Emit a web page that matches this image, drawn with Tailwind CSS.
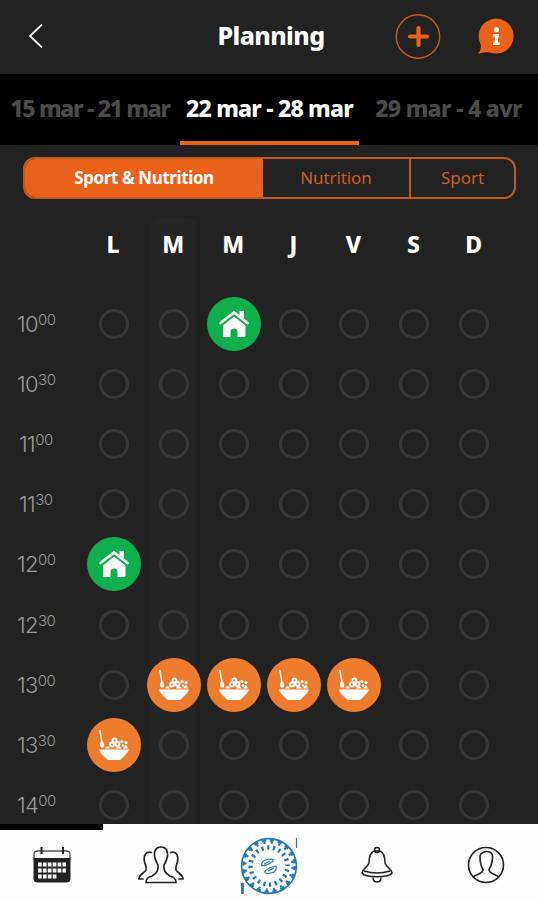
<!DOCTYPE html>
<html lang="fr">

<head>
    <meta charset="UTF-8">
    <meta name="viewport" content="width=device-width, initial-scale=1.0">
    <title>Planning</title>
    <script src="https://cdn.jsdelivr.net/npm/@tailwindcss/browser@4"></script>
</head>

<body class="flex flex-col w-[538px] h-[900px] overflow-hidden bg-[#222] text-white font-['Noto_Sans',sans-serif]">
    <!-- Header -->
    <header class="grid grid-cols-[1fr_auto_1fr] items-center h-[74px] shrink-0 pl-7 pr-6">
        <button class="w-4">
            <svg class="w-4 h-6 mt-[-2px]" viewBox="0 0 16 24" fill="none" stroke="#eee" stroke-width="1.8"><path d="M14 0.5L2 12L14 23.5" /></svg>
        </button>
        <h1 class="text-[25px] leading-8 font-extrabold tracking-[-0.6px] mt-[-4px]">Planning</h1>
        <div class="flex items-center justify-end gap-[35px]">
            <button>
                <svg class="w-[46px] h-[46px]" viewBox="0 0 46 46" fill="none" stroke="#e9611b"><circle cx="23" cy="22.500" r="21.700" stroke="#c9581f" stroke-width="1.4" /><path d="M23.500 14V31M15 22.500H32" stroke-width="4.2" stroke-linecap="round" /></svg>
            </button>
            <button>
                <svg class="w-[38px] h-[38px]" viewBox="0 0 38 38"><path d="M2 36Q6 31 4.500 26A17.500 17.500 0 1 1 14 34.500Q8 33.500 2 36Z" fill="#e9611b" /><circle cx="20.500" cy="11.700" r="2.500" fill="#fff" /><path d="M17 16H23L21.700 24.500H24L23.500 27H16.800L17.200 24.500H18.400L19.200 18.500H16.700Z" fill="#fff" /></svg>
            </button>
        </div>
    </header>

    <!-- Weeks -->
    <nav class="flex h-[71px] shrink-0 bg-black text-[23px] font-extrabold whitespace-nowrap">
        <button class="flex w-[180px] justify-center pt-[17px] tracking-[-1.3px] text-[#4b4b4b]">15 mar - 21 mar</button>
        <button class="flex w-[179px] justify-center pt-[17px] tracking-[-0.8px] border-b-4 border-[#e9611b]">22 mar - 28 mar</button>
        <button class="flex w-[179px] justify-center pt-[17px] tracking-[-0.7px] text-[#4b4b4b]">29 mar - 4 avr</button>
    </nav>

    <!-- Filters -->
    <div class="flex h-[42px] shrink-0 mt-3 ml-[23px] w-[493px] border-2 border-[#bd5a26] rounded-xl overflow-hidden text-[17px] text-[#c85e2a]">
        <button class="w-[238px] pb-px bg-[#e9611b] text-white font-bold tracking-[-0.4px]">Sport &amp; Nutrition</button>
        <button class="w-[148px] border-r-2 border-[#bd5a26] tracking-[-0.1px]">Nutrition</button>
        <button class="flex-1">Sport</button>
    </div>

    <!-- Planning grid -->
    <main class="flex flex-1 min-h-0 overflow-hidden pt-[19px]">
        <div id="hours" class="w-[83.5px] shrink-0 pt-[76px] pl-[17px] text-[#999] font-['Inter',sans-serif]"></div>
        <div id="days" class="flex"></div>
    </main>

    <!-- Bottom bar -->
    <footer class="h-[76px] shrink-0 bg-[#fdfdfd] text-black">
        <div class="w-[103px] h-1.5 bg-black"></div>
        <div class="grid grid-cols-5 items-center h-[70px] pb-1">
            <svg class="w-[38px] h-[38px] ml-[33px] mt-1" viewBox="0 0 38 38" fill="none" stroke="#222">
                <path d="M1 14V8Q1 5 5 5H33Q37 5 37 8V14" stroke="#555" stroke-width="1.3" />
                <path d="M8.500 1V8M30 1V8" stroke-width="2" />
                <path d="M1 12.500H37V33Q37 36 34 36H4Q1 36 1 33Z" fill="#222" />
                <path d="M5 18.500H33M5 24.500H33M5 30.500H24" stroke="#fff" stroke-width="4" stroke-dasharray="3.7 1.2" />
            </svg>
            <svg class="w-[46px] h-[38px] ml-[30px] mt-1" viewBox="0 0 46 38" fill="none" stroke="#222" stroke-width="1.7" stroke-linecap="round" stroke-linejoin="round">
                <path d="M23 1C17 1 16 6 16.500 10C17 14 19 17 20 19C21 25 18 28 14 30C10 31 8 33 8 36.500H38C38 33 36 31 32 30C28 28 25 25 26 19C27 17 29 14 29.500 10C30 6 29 1 23 1Z" />
                <path d="M13.500 6.500C7 5 5.500 10 6.500 16C7 19 9 20 8 24C7 27 1 28 1 33H5M32.500 6.500C39 5 40.500 10 39.500 16C39 19 37 20 38 24C39 27 45 28 45 33H41" />
            </svg>
            <svg class="w-[58px] h-[60px] ml-[25px] mt-1" viewBox="0 0 58 60" fill="none" stroke="#2478b2">
                <circle cx="29" cy="31" r="27.400" stroke-width="1.6" />
                <circle cx="29" cy="31" r="25.800" stroke-width="2.4" stroke-dasharray="4.400 3.705" />
                <circle cx="29" cy="31" r="23.700" stroke-width="2.4" stroke-dasharray="2.200 5.246" stroke-dashoffset="-1" />
                <circle cx="29" cy="31" r="18.500" stroke-width="4.4" stroke-dasharray="2.200 3.612" stroke-dashoffset="-3.400" />
                <g stroke-width="1.2">
                    <path d="M22 31Q20 25 31 24Q35 24 32 27Q28 30 22 31ZM24 29L30 26" />
                    <path d="M36 31Q38 38 27 38.500Q23 38 26 35Q30 32 36 31ZM28 36L34 33" />
                </g>
                <path d="M56.500 3V13" stroke-width="1.2" />
                <path d="M2.500 48V59" stroke-width="2.8" />
            </svg>
            <svg class="w-8 h-[38px] ml-[38px] mt-1" viewBox="0 0 32 38" fill="none" stroke="#222" stroke-width="1.500" stroke-linejoin="round">
                <circle cx="16" cy="4" r="2.500" />
                <path d="M13 5C8 7 8 13 8 17C6 22 1 23 1 27C4 32 28 32 31 27C31 23 26 22 24 17C24 13 24 7 19 5Z" />
                <path d="M3 25Q16 29 29 25M12 31.500C12 37.500 20 37.500 20 31.500" />
            </svg>
            <svg class="w-[38px] h-[38px] ml-[37px] mt-1" viewBox="0 0 38 38" fill="none" stroke="#222" stroke-width="1.600">
                <circle cx="19" cy="19" r="17.500" />
                <path d="M6 31C9 28 16 28 16 23.500C14.500 21 13 18 13 11C13 7 15 7.500 17 6C20 5 25.500 5.500 25.500 10C26 16 24 20 22 23.500C22 28 29 28 32 31" />
            </svg>
        </div>
    </footer>

    <script>
        const days = ['L', 'M', 'M', 'J', 'V', 'S', 'D'];
        const hours = ['10:00', '10:30', '11:00', '11:30', '12:00', '12:30', '13:00', '13:30', '14:00'];
        const today = 1;

        // "jour-heure": type d'activité
        const events = {
            '2-10:00': 'home',
            '0-12:00': 'home',
            '1-13:00': 'meal',
            '2-13:00': 'meal',
            '3-13:00': 'meal',
            '4-13:00': 'meal',
            '0-13:30': 'meal'
        };

        const cells = {
            empty: `<div class="w-[30px] h-[30px] shrink-0 rounded-full border-[3.5px] border-[#383838]"></div>`,
            home: `
                <div class="flex items-center justify-center w-[54px] h-[54px] shrink-0 rounded-full bg-[#10ae4c]">
                    <svg class="w-[30px] h-[28px]" viewBox="0 0 30 28" fill="#fff">
                        <path d="M1.500 13L15 2.500L28.500 13" fill="none" stroke="#fff" stroke-width="2.600" stroke-linecap="round" />
                        <path d="M20.500 1H25V8.500L20.500 5Z" />
                        <path d="M15 6.500L26.500 15.500V25.500Q26.500 27 25 27H18.500V21Q18 18.500 15 18.500Q12 18.500 11.500 21V27H5.500Q4 27 4 25.500V15.500Z" />
                    </svg>
                </div>`,
            meal: `
                <div class="flex items-center justify-center w-[54px] h-[54px] shrink-0 rounded-full bg-[#ee7c2e]">
                    <svg class="w-[30px] h-[32px]" viewBox="0 0 30 32" fill="#fff">
                        <path d="M0 20.500H30Q29 24 21 31H9Q1 25 0 20.500Z" />
                        <path d="M0 1H1.500L3.500 12Q6.500 16 4.500 18.500Q1 19 1 16Q1 14 2 12Z" />
                        <path d="M6 19.500Q7 16.500 10 17.500L11 19.500ZM17 19.500L19 15.500L23 19.500ZM24 19.500L27 15.500L29 19.500Z" />
                        <g fill="none" stroke="#fff" stroke-width="1.800"><circle cx="15.500" cy="11.500" r="2" /><circle cx="13" cy="15.500" r="2" /><circle cx="18.500" cy="15" r="2" /></g>
                        <circle cx="23" cy="12.500" r="1.600" /><circle cx="27" cy="13.500" r="1.500" /><circle cx="24" cy="16.500" r="1.300" />
                    </svg>
                </div>`
        };

        document.getElementById('hours').innerHTML = hours.map(hour => {
            const [h, m] = hour.split(':');
            return `
                <div class="flex items-center h-[60.1px]">
                    <span class="${h === '11' ? 'ml-0.5' : ''} text-[22px] leading-none font-light tracking-[-0.6px]">${h}</span>
                    <span class="text-[15px] leading-none font-light tracking-[-0.5px] mb-[9px]">${m}</span>
                </div>`;
        }).join('');

        document.getElementById('days').innerHTML = days.map((day, i) => `
            <div class="flex flex-col items-center w-[45px] mx-[7.55px] rounded-t-lg ${i === today ? 'bg-[#252525]' : ''}">
                <div class="h-[76px] shrink-0 pt-[10px] pr-px text-[23px] leading-8 font-extrabold">${day}</div>
                ${hours.map(hour => `
                    <div class="flex items-center justify-center w-[54px] h-[60.1px] shrink-0">${cells[events[i + '-' + hour] || 'empty']}</div>
                `).join('')}
            </div>
        `).join('');
    </script>
</body>

</html>
